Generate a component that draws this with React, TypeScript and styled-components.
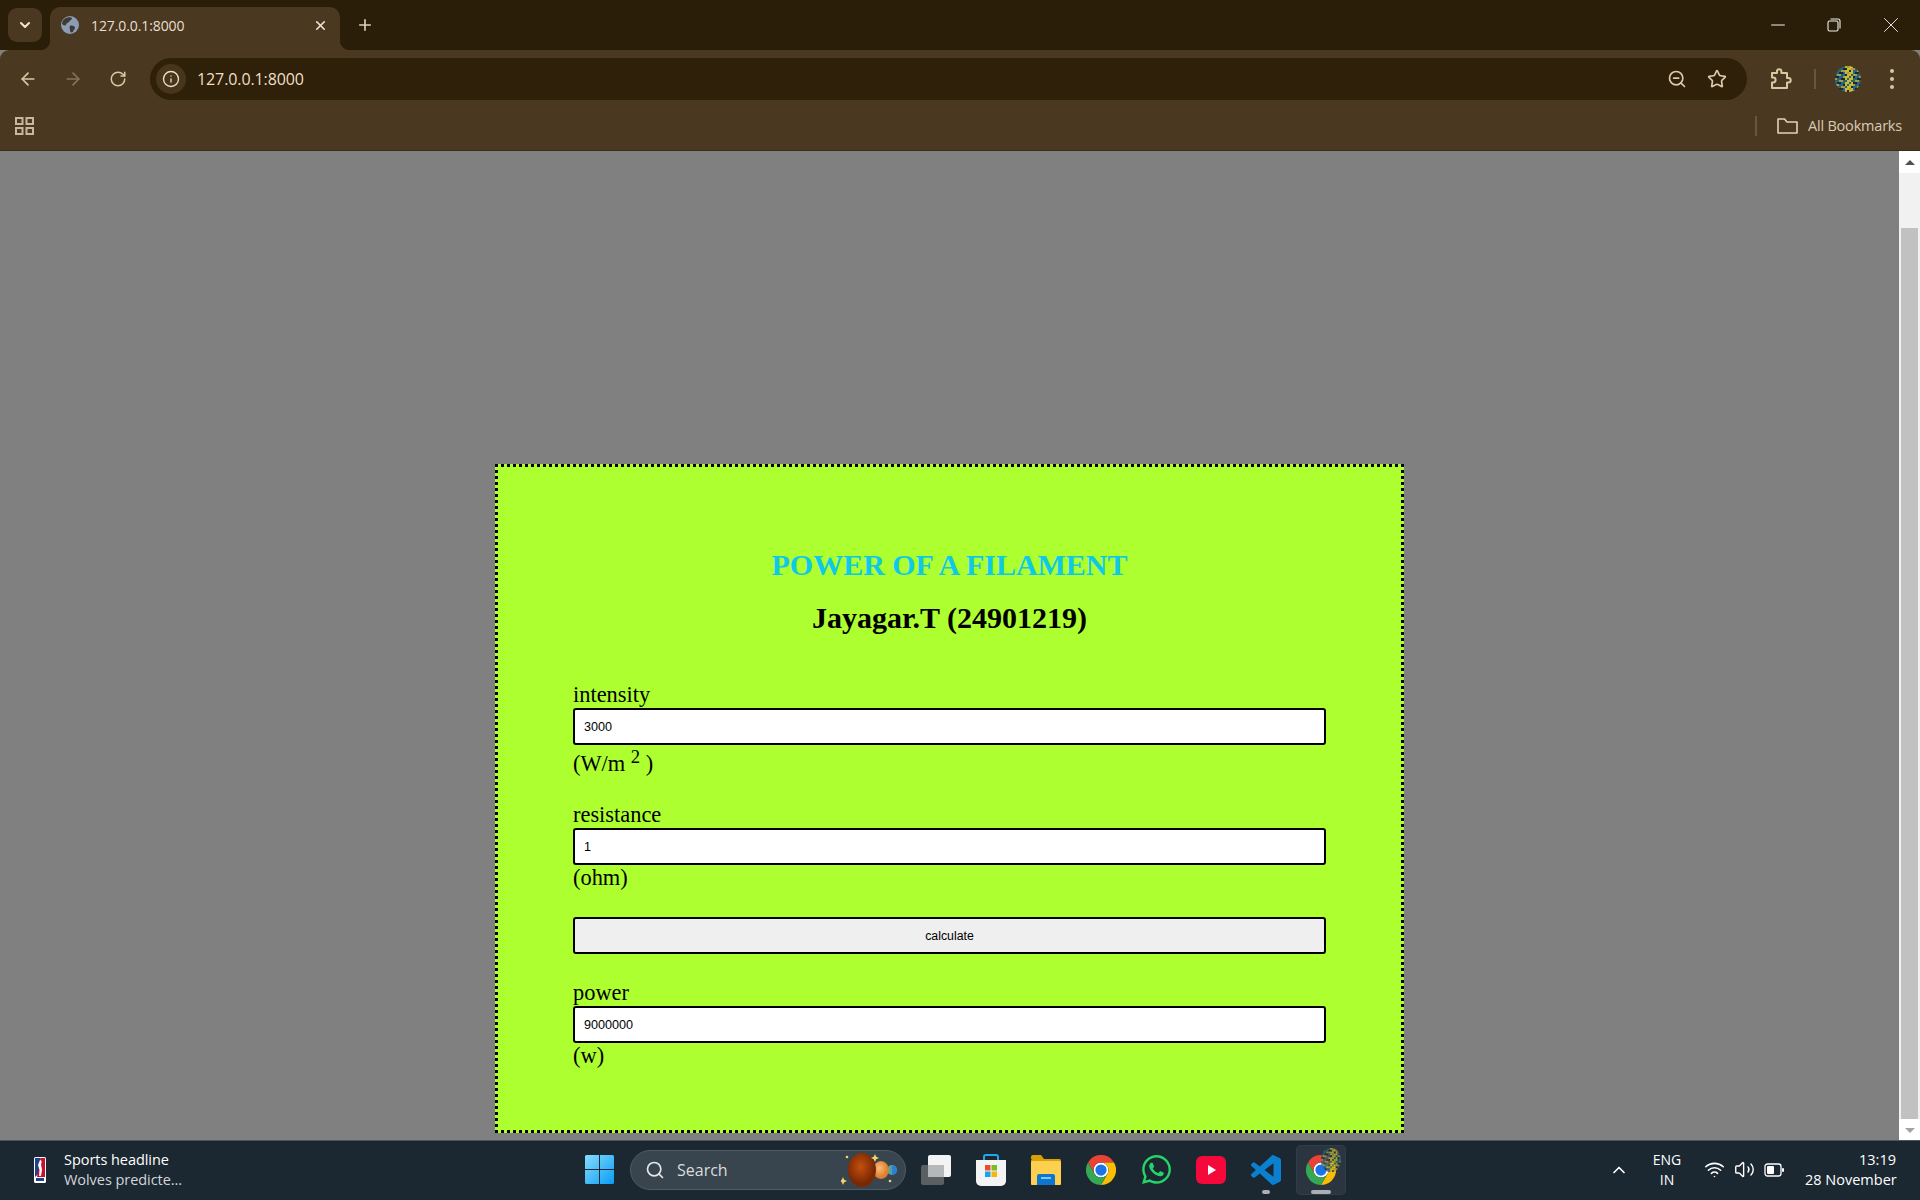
import React from "react";
import styled, { createGlobalStyle } from "styled-components";
import { ArrowLeft, ArrowRight, RotateCw, Info, ZoomOut, Star, X, Plus, ChevronDown, ChevronUp, Minus, Search, Wifi, Volume2 } from "lucide-react";
import { FaWhatsapp } from "react-icons/fa";

const Global = createGlobalStyle`
  html, body { margin: 0; padding: 0; height: 1200px; overflow: hidden; background: #808080; }
  * { box-sizing: border-box; }
`;
const Screen = styled.div`
  width: 1920px; height: 1200px; display: flex; flex-direction: column; overflow: hidden;
  font-family: "Open Sans", "Noto Sans", sans-serif;
`;
/* Browser chrome */
const Strip = styled.div`
  height: 50px; background: #2b1e09; display: flex; align-items: flex-end; padding-left: 8px; position: relative;
`;
const TabMenu = styled.div`
  width: 34px; height: 34px; margin-bottom: 8px; border-radius: 9px; background: #4a3820; color: #f2e6d2;
  display: flex; align-items: center; justify-content: center;
`;
const Tab = styled.div`
  position: relative; margin-left: 8px; width: 290px; height: 43px; background: #4a3820; border-radius: 10px 10px 0 0;
  display: flex; align-items: center; padding: 0 12px 7px 11px; color: #e9dfcf; font-size: 14px;
  &::before, &::after { content: ""; position: absolute; bottom: 0; width: 10px; height: 10px; }
  &::before { left: -10px; background: radial-gradient(circle at 0 0, transparent 10px, #4a3820 10.5px); }
  &::after { right: -10px; background: radial-gradient(circle at 100% 0, transparent 10px, #4a3820 10.5px); }
`;
const TabTitle = styled.span` margin-left: 12px; flex: 1; font-size: 14px; font-family: "Open Sans", sans-serif; letter-spacing: -0.1px; `;
const NewTab = styled.div`
  width: 30px; height: 30px; margin: 0 0 10px 10px; color: #e0cfb4; display: flex; align-items: center; justify-content: center;
`;
const WindowControls = styled.div` margin-left: auto; display: flex; height: 50px; `;
const WindowButton = styled.div<{ $w: number }>`
  width: ${p => p.$w}px; display: flex; align-items: center; justify-content: center; color: #f0f0f0;
`;
const Toolbar = styled.div`
  height: 51px; background: #4a3820; display: flex; align-items: flex-start; padding: 8px 0 0 5px; border-radius: 9px 9px 0 0;
  margin-top: 0; color: #dcc6a4;
`;
const NavButton = styled.div<{ $dim?: boolean }>`
  width: 45px; height: 42px; display: flex; align-items: center; justify-content: center;
  color: ${p => (p.$dim ? "#867459" : "#dcc6a4")};
`;
const Omnibox = styled.div`
  margin-left: 10px; width: 1597px; height: 42px; border-radius: 21px; background: #2f2009;
  display: flex; align-items: center; padding: 0 10px 0 6px;
`;
const InfoChip = styled.div`
  width: 30px; height: 30px; border-radius: 50%; background: #47351c; color: #ecdfc9;
  display: flex; align-items: center; justify-content: center;
`;
const Url = styled.span` margin-left: 11px; color: #f0dfc4; font-size: 16px; letter-spacing: -0.1px; `;
const OmniAction = styled.div<{ $first?: boolean }>`
  width: 40px; height: 40px; display: flex; align-items: center; justify-content: center; color: #dcc9ab;
  ${p => p.$first && "margin-left: auto;"}
`;
const PuzzleWrap = styled.div` width: 40px; height: 42px; margin-left: 14px; display: flex; align-items: center; justify-content: center; color: #dcc6a4; `;
const VSep = styled.div` width: 2px; height: 20px; margin: 11px 0 0 13px; background: #6a5638; `;
const AvatarWrap = styled.div` margin: 8px 0 0 19px; width: 26px; height: 26px; border-radius: 50%; overflow: hidden; flex: none; `;
const MenuButton = styled.div`
  width: 40px; height: 42px; margin-left: 11px; display: flex; flex-direction: column; gap: 4px; align-items: center; justify-content: center;
  span { width: 4px; height: 4px; border-radius: 50%; background: #dcc6a4; }
`;
const Bookmarks = styled.div`
  height: 50px; background: #4a3820; display: flex; align-items: center; padding: 0 18px 0 15px; color: #dcc6a4; border-bottom: 1px solid #3a2c18;
`;
const BookSep = styled.div` margin-left: auto; width: 2px; height: 20px; background: #6a5638; `;
const BookFolder = styled.div` margin-left: 20px; display: flex; color: #e0d2bc; `;
const BookLabel = styled.span` margin-left: 10px; color: #d8cbb8; font-size: 14.5px; letter-spacing: -0.2px; `;

/* Page */
const Viewport = styled.div` flex: 1; display: flex; min-height: 0; background: #808080; `;
const Page = styled.div` flex: 1; display: flex; justify-content: center; padding-top: 313px; `;
const Card = styled.form`
  width: 909px; height: 669px; background: #adff2f; border: 3px dotted #000; padding: 80px 75px 0;
  font-family: "Liberation Serif", "Times New Roman", serif; color: #000;
`;
const Title = styled.h1`
  margin: 0; font-size: 30px; line-height: 36px; font-weight: 700; text-align: center; color: #10c9e6; letter-spacing: -0.03px;
`;
const Author = styled.h2`
  margin: 18px 0 47px; font-size: 30px; line-height: 34px; font-weight: 700; text-align: center;
`;
const Field = styled.div<{ $gap: number }>` display: block; margin-bottom: ${p => p.$gap}px; `;
const Label = styled.label` display: block; font-size: 22.4px; line-height: 26px; `;
const Unit = styled.div`
  font-size: 22.4px; line-height: 26px;
  sup { line-height: 24px; }
`;
const Input = styled.input`
  display: block; width: 100%; height: 37px; border: 2.4px solid #000; border-radius: 3px; background: #fff; padding: 0 9px;
  font: 12.6px "Liberation Sans", Arial, sans-serif; color: #000; outline: none;
`;
const Calc = styled.button`
  display: block; width: 100%; height: 37px; border: 2.4px solid #000; border-radius: 3px; background: #efefef; padding: 0;
  font: 12.3px "Liberation Sans", Arial, sans-serif; color: #000; margin-bottom: 26px;
`;
/* Scrollbar */
const ScrollBar = styled.div` width: 21px; background: #f1f1f1; display: flex; flex-direction: column; align-items: center; `;
const ScrollArrow = styled.div<{ $c: string; $down?: boolean }>`
  height: 22px; width: 21px; background: #fff; display: flex; align-items: center; justify-content: center; flex: none;
  &::before { content: ""; border-left: 5px solid transparent; border-right: 5px solid transparent;
    ${p => (p.$down ? `border-top: 5px solid ${p.$c};` : `border-bottom: 5px solid ${p.$c};`)} }
`;
const ScrollThumb = styled.div` width: 17px; height: 891px; margin-top: 55px; background: #c1c1c1; flex: none; `;
const ScrollFill = styled.div` flex: 1; `;

/* Taskbar */
const Taskbar = styled.div`
  height: 60px; flex: none; background: #1b2731; border-top: 1px solid #49535b; display: flex; align-items: center; color: #fff;
  padding-bottom: 2px;
`;
const Widget = styled.div` width: 585px; padding-left: 34px; display: flex; align-items: center; flex: none; `;
const WidgetText = styled.div` margin-left: 18px; font-size: 14.5px; line-height: 20px; letter-spacing: -0.05px; `;
const Dim = styled.div` color: #d2d6d9; `;
const SearchPill = styled.div`
  margin-left: 16px; width: 276px; height: 40px; border-radius: 20px; background: #38444e; border: 1px solid #505b64;
  display: flex; align-items: center; padding: 0 6px 0 14px; color: #e4e6e8; font-size: 16px;
`;
const SearchText = styled.span` margin-left: 12px; color: #d8dcdf; `;
const Planets = styled.div` margin-left: auto; display: flex; `;
const Slots = styled.div` margin-left: 5px; display: flex; gap: 5px; `;
const Slot = styled.div<{ $active?: boolean }>`
  position: relative; width: 50px; height: 50px; display: flex; align-items: center; justify-content: center; border-radius: 5px;
  ${p => p.$active && "background: #2a353f; box-shadow: inset 0 0 0 1px #323d47;"}
`;
const Running = styled.div<{ $w: number }>`
  position: absolute; left: 50%; bottom: 1px; transform: translateX(-50%); width: ${p => p.$w}px; height: 4px; border-radius: 2px; background: #a9afb4;
`;
const Tray = styled.div` margin-left: auto; padding-right: 24px; display: flex; align-items: center; color: #fff; font-size: 14.5px; `;
const TrayIcon = styled.div<{ $w: number; $ml?: number }>`
  width: ${p => p.$w}px; margin-left: ${p => p.$ml ?? 0}px; display: flex; justify-content: center;
`;
const Lang = styled.div` width: 46px; margin-left: 10px; text-align: center; font-size: 14px; line-height: 20px; `;
const Clock = styled.div` margin-left: 17px; width: 91px; text-align: right; line-height: 20px; font-size: 14.5px; white-space: nowrap; `;

const Globe = () => (
  <svg width="18" height="18" viewBox="0 0 18 18">
    <circle cx="9" cy="9" r="9" fill="#8b9cb3" />
    <path d="M5 2c2-1 5-1 6 0 0 2-2 2-3 4-1 1-3 1-3 3-1 1-3 0-4-1 0-3 2-5 4-6zM9 10c2-1 5 0 5 2 0 1-2 2-2 4-2 1-3 0-3-2s-1-3 0-4z" fill="#3e3a34" />
  </svg>
);
const Apps = () => (
  <svg width="20" height="18" viewBox="0 0 20 18" fill="none" stroke="#c8b79e" strokeWidth="2">
    <rect x="1" y="1" width="6.5" height="6" /><rect x="11.5" y="1" width="6.5" height="6" />
    <rect x="1" y="11" width="6.5" height="6" /><rect x="11.5" y="11" width="6.5" height="6" />
  </svg>
);
const Puzzle = () => (
  <svg width="22" height="22" viewBox="0 0 22 22" fill="none" stroke="currentColor" strokeWidth="2" strokeLinejoin="round">
    <path d="M2 5h5V3.5a2.2 2.2 0 0 1 4.4 0V5H17v5h1.5a2.2 2.2 0 0 1 0 4.4H17V20H2v-5.6h1.2a2.4 2.4 0 0 0 0-4.8H2z" />
  </svg>
);
const speck = ["#1d5fb8", "#c9b41f", "#1e2a20", "#8f8a3a", "#2c6a4a", "#0f1a38", "#a89a4a", "#2f5fb0"];
const Avatar = ({ size }: { size: number }) => (
  <svg width={size} height={size} viewBox="0 0 13 13">
    <rect width="13" height="13" fill="#3c4d3a" />
    {Array.from({ length: 169 }, (_, i) => (
      <rect key={i} x={i % 13} y={Math.floor(i / 13)} width="1" height="1" fill={Math.abs((i % 13) - 6.5) < 2 && i % 3 ? "#cdbb2a" : speck[(i * i * 7 + i * 3) % 8]} />
    ))}
  </svg>
);
const FolderOutline = () => (
  <svg width="21" height="16" viewBox="0 0 21 16" fill="none" stroke="currentColor" strokeWidth="1.6" strokeLinejoin="round">
    <path d="M1 1h6.5l2.5 3h10v11H1z" />
  </svg>
);
const Nba = () => (
  <svg width="12" height="26" viewBox="0 0 12 26">
    <rect width="12" height="26" rx="1.5" fill="#fff" />
    <path d="M1 1h5.5v14L1 20z" fill="#1d428a" /><path d="M6.5 1H11v19H3z" fill="#c8102e" />
    <path d="M6 3c2 0 2 3 1 4l1 6-1 6H5l.5-6-1.5-5z" fill="#fff" /><rect x="2" y="21" width="8" height="3" fill="#1d428a" />
  </svg>
);
const WinLogo = () => (
  <svg width="29" height="29" viewBox="0 0 29 29">
    <defs><linearGradient id="w" x1="0" y1="0" x2="1" y2="1"><stop offset="0" stopColor="#86dcfb" /><stop offset="1" stopColor="#0a9cf5" /></linearGradient></defs>
    <path d="M0 1.5A1.5 1.5 0 0 1 1.5 0H14v14H0zM15 0h12.5A1.5 1.5 0 0 1 29 1.5V14H15zM0 15h14v14H1.5A1.5 1.5 0 0 1 0 27.5zM15 15h14v12.5a1.5 1.5 0 0 1-1.5 1.5H15z" fill="url(#w)" />
  </svg>
);
const PlanetArt = () => (
  <svg width="58" height="36" viewBox="0 0 58 36">
    <defs>
      <radialGradient id="p1" cx=".45" cy=".4"><stop offset="0" stopColor="#c4500f" /><stop offset="1" stopColor="#7a2803" /></radialGradient>
      <radialGradient id="p2" cx=".4" cy=".4"><stop offset="0" stopColor="#f8bc7c" /><stop offset="1" stopColor="#dd7f2e" /></radialGradient>
    </defs>
    <circle cx="51" cy="18" r="5" fill="#49a6a8" /><path d="M51 13a5 5 0 0 1 0 10z" fill="#2f7fd0" />
    <ellipse cx="40" cy="18" rx="8" ry="9" fill="url(#p2)" />
    <ellipse cx="21" cy="18" rx="14" ry="17" fill="url(#p1)" />
    <g fill="#f4d36a"><path d="M2 25l1.2 2.8L6 29l-2.8 1.2L2 33l-1.2-2.8L-2 29l2.8-1.2z" /><path d="M34 2l1.2 2.8L38 6l-2.8 1.2L34 10l-1.2-2.8L30 6l2.8-1.2z" /><circle cx="6" cy="5" r="1.3" /><circle cx="49" cy="29" r="1.3" /></g>
  </svg>
);
const TaskView = () => (
  <svg width="30" height="30" viewBox="0 0 30 30">
    <rect x="0" y="10" width="23" height="20" rx="2" fill="#5b5f62" />
    <rect x="7" y="0" width="23" height="22" rx="2" fill="#f3f3f3" />
    <rect x="7" y="10" width="16" height="12" fill="#b5b7b8" />
  </svg>
);
const Store = () => (
  <svg width="30" height="32" viewBox="0 0 30 32">
    <path d="M8 6V3a2 2 0 0 1 2-2h10a2 2 0 0 1 2 2v3" fill="none" stroke="#22a8e6" strokeWidth="2" />
    <path d="M0 6h30v21a5 5 0 0 1-5 5H5a5 5 0 0 1-5-5z" fill="#f4f4f4" />
    <rect x="9" y="11" width="5.5" height="5.5" fill="#e8502a" /><rect x="15.5" y="11" width="5.5" height="5.5" fill="#7fba27" />
    <rect x="9" y="17.5" width="5.5" height="5.5" fill="#1aa3e8" /><rect x="15.5" y="17.5" width="5.5" height="5.5" fill="#fbb40c" />
  </svg>
);
const Explorer = () => (
  <svg width="30" height="30" viewBox="0 0 30 30">
    <path d="M0 2a2 2 0 0 1 2-2h8l3 4h-13z" fill="#d99f0a" /><rect y="4" width="30" height="26" rx="1.5" fill="#d99f0a" />
    <rect y="6" width="30" height="24" rx="1.5" fill="#fdd04f" />
    <path d="M6 21a2 2 0 0 1 2-2h14a2 2 0 0 1 2 2v9H6z" fill="#0d77cf" /><rect x="10" y="22" width="10" height="2" fill="#7cc7f5" />
  </svg>
);
const Chrome = () => (
  <svg width="30" height="30" viewBox="0 0 48 48">
    <circle cx="24" cy="24" r="12" fill="#fff" /><circle cx="24" cy="24" r="9" fill="#1a73e8" />
    <path d="M24 12h20.8A24 24 0 0 0 3.2 12L13.6 30A12 12 0 0 1 24 12z" fill="#ea4335" />
    <path d="M34.4 30 24 48A24 24 0 0 0 44.8 12H24a12 12 0 0 1 10.4 18z" fill="#fbbc04" />
    <path d="M13.6 30 3.2 12A24 24 0 0 0 24 48L34.4 30a12 12 0 0 1-20.8 0z" fill="#34a853" />
  </svg>
);
const YouTube = () => (
  <svg width="30" height="28" viewBox="0 0 30 28">
    <rect width="30" height="28" rx="6" fill="#f5093a" /><path d="M12 9l8 5-8 5z" fill="#fff" />
  </svg>
);
const VsCode = () => (
  <svg width="30" height="30" viewBox="0 0 24 24">
    <path fill="#0b7fd0" d="M23.15 2.587L18.21.21a1.494 1.494 0 0 0-1.705.29l-9.46 8.63-4.12-3.128a.999.999 0 0 0-1.276.057L.327 7.261A1 1 0 0 0 .326 8.74L3.899 12 .326 15.26a1 1 0 0 0 .001 1.479L1.65 17.94a.999.999 0 0 0 1.276.057l4.12-3.128 9.46 8.63a1.492 1.492 0 0 0 1.704.29l4.942-2.377A1.5 1.5 0 0 0 24 20.06V3.939a1.5 1.5 0 0 0-.85-1.352zm-5.146 14.861L10.826 12l7.178-5.448v10.896z" />
  </svg>
);
const Battery = () => (
  <svg width="20" height="14" viewBox="0 0 20 14" fill="none">
    <rect x="1" y="1" width="16" height="12" rx="2.5" stroke="#fff" strokeWidth="1.3" />
    <rect x="3" y="3" width="7" height="8" rx="1" fill="#fff" /><rect x="18" y="5" width="2" height="4" rx="1" fill="#fff" />
  </svg>
);
const OverlayAvatar = styled.div`
  position: absolute; top: 3px; right: 5px; width: 20px; height: 24px; border-radius: 50%; overflow: hidden; opacity: .8;
`;

export default function App() {
  return (
    <Screen>
      <Global />
      <Strip>
        <TabMenu><ChevronDown size={16} strokeWidth={3} /></TabMenu>
        <Tab>
          <Globe />
          <TabTitle>127.0.0.1:8000</TabTitle>
          <X size={15} strokeWidth={2.6} color="#efe6d8" />
        </Tab>
        <NewTab><Plus size={18} strokeWidth={2.2} /></NewTab>
        <WindowControls>
          <WindowButton $w={56}><Minus size={22} strokeWidth={1.1} /></WindowButton>
          <WindowButton $w={56}>
            <svg width="14" height="14" viewBox="0 0 14 14" fill="none" stroke="#f0f0f0" strokeWidth="1.1"><rect x="1" y="3" width="10" height="10" rx="1.5" /><path d="M3.5 1H11a2 2 0 0 1 2 2v7.5" /></svg>
          </WindowButton>
          <WindowButton $w={58}><X size={26} strokeWidth={0.85} /></WindowButton>
        </WindowControls>
      </Strip>
      <Toolbar>
        <NavButton><ArrowLeft size={20} strokeWidth={2} /></NavButton>
        <NavButton $dim><ArrowRight size={20} strokeWidth={2} /></NavButton>
        <NavButton><RotateCw size={18} strokeWidth={2} /></NavButton>
        <Omnibox>
          <InfoChip><Info size={18} strokeWidth={1.8} /></InfoChip>
          <Url>127.0.0.1:8000</Url>
          <OmniAction $first><ZoomOut size={20} strokeWidth={2} /></OmniAction>
          <OmniAction><Star size={20} strokeWidth={2} /></OmniAction>
        </Omnibox>
        <PuzzleWrap><Puzzle /></PuzzleWrap>
        <VSep />
        <AvatarWrap><Avatar size={26} /></AvatarWrap>
        <MenuButton><span /><span /><span /></MenuButton>
      </Toolbar>
      <Bookmarks>
        <Apps />
        <BookSep />
        <BookFolder><FolderOutline /></BookFolder>
        <BookLabel>All Bookmarks</BookLabel>
      </Bookmarks>
      <Viewport>
        <Page>
          <Card>
            <Title>POWER OF A FILAMENT</Title>
            <Author>Jayagar.T (24901219)</Author>
            <Field $gap={25}>
              <Label>intensity</Label>
              <Input defaultValue="3000" />
              <Unit>(W/m <sup>2</sup> )</Unit>
            </Field>
            <Field $gap={26}>
              <Label>resistance</Label>
              <Input defaultValue="1" />
              <Unit>(ohm)</Unit>
            </Field>
            <Calc type="button">calculate</Calc>
            <Field $gap={0}>
              <Label>power</Label>
              <Input defaultValue="9000000" />
              <Unit>(w)</Unit>
            </Field>
          </Card>
        </Page>
        <ScrollBar>
          <ScrollArrow $c="#505050" />
          <ScrollThumb />
          <ScrollFill />
          <ScrollArrow $c="#a3a3a3" $down />
        </ScrollBar>
      </Viewport>
      <Taskbar>
        <Widget>
          <Nba />
          <WidgetText>Sports headline<Dim>Wolves predicte...</Dim></WidgetText>
        </Widget>
        <WinLogo />
        <SearchPill>
          <Search size={20} strokeWidth={2} />
          <SearchText>Search</SearchText>
          <Planets><PlanetArt /></Planets>
        </SearchPill>
        <Slots>
          <Slot><TaskView /></Slot>
          <Slot><Store /></Slot>
          <Slot><Explorer /></Slot>
          <Slot><Chrome /></Slot>
          <Slot><FaWhatsapp size={33} color="#25d366" /></Slot>
          <Slot><YouTube /></Slot>
          <Slot><VsCode /><Running $w={8} /></Slot>
          <Slot $active><Chrome /><OverlayAvatar><Avatar size={24} /></OverlayAvatar><Running $w={20} /></Slot>
        </Slots>
        <Tray>
          <TrayIcon $w={30}><ChevronUp size={20} strokeWidth={2} /></TrayIcon>
          <Lang>ENG<br />IN</Lang>
          <TrayIcon $w={28} $ml={10}><Wifi size={21} strokeWidth={1.8} /></TrayIcon>
          <TrayIcon $w={28} $ml={2}><Volume2 size={21} strokeWidth={1.6} /></TrayIcon>
          <TrayIcon $w={28} $ml={2}><Battery /></TrayIcon>
          <Clock>13:19<br />28 November</Clock>
        </Tray>
      </Taskbar>
    </Screen>
  );
}
